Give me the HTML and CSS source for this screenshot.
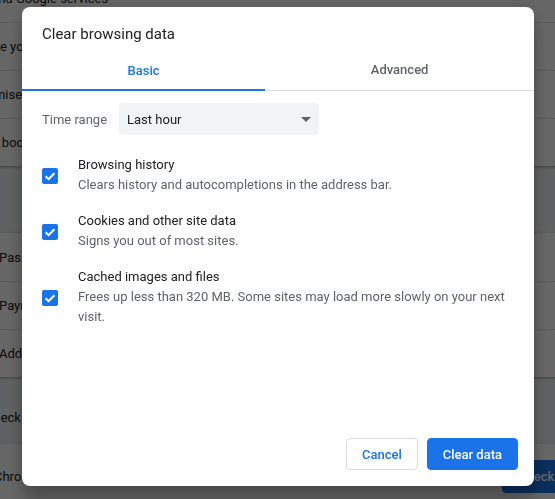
FILE: index.html
```html
<!DOCTYPE html>
<html lang="en">
<head>
<meta charset="utf-8">
<title>Clear browsing data</title>
<link rel="stylesheet" href="styles.css">
</head>
<body>
<div class="page">
  <div class="card">
    <div class="row people"><span>Sync and Google services</span></div>
    <div class="row people"><span>Manage your Google Account</span></div>
    <div class="row people"><span>Customise your Chrome profile</span></div>
    <div class="row people"><span>Import bookmarks and settings</span></div>
  </div>
  <div class="heading">Autofill</div>
  <div class="card">
    <div class="row autofill"><span>Passwords</span></div>
    <div class="row autofill"><span>Payment methods</span></div>
    <div class="row autofill"><span>Addresses and more</span></div>
  </div>
  <div class="heading safety-heading">Safety check</div>
  <div class="card">
    <div class="row safety">
      <span class="safety-text">Chrome can help keep you safe from data breaches, bad extensions and more</span>
      <span class="check-now">Check now</span>
    </div>
  </div>
</div>

<div class="backdrop">
  <div class="dialog">
    <div class="dialog-title">Clear browsing data</div>
    <div class="tabs">
      <div class="tab tab-selected">Basic</div>
      <div class="tab">Advanced</div>
    </div>
    <div class="dialog-body">
      <div class="time-range">
        <span class="time-label">Time range</span>
        <div class="select">
          <span>Last hour</span>
          <svg class="select-arrow" width="10" height="5" viewBox="0 0 10 5"><path d="M0 0 L10 0 L5 5 Z" fill="#5f6368"/></svg>
        </div>
      </div>
      <div class="items">
        <div class="item">
          <span class="checkbox"><svg width="16" height="16" viewBox="0 0 16 16"><path d="M3.6 8.2 L6.6 11.1 L12.4 5.2" fill="none" stroke="#fff" stroke-width="2"/></svg></span>
          <div class="item-text">
            <div class="item-title">Browsing history</div>
            <div class="item-desc">Clears history and autocompletions in the address bar.</div>
          </div>
        </div>
        <div class="item">
          <span class="checkbox"><svg width="16" height="16" viewBox="0 0 16 16"><path d="M3.6 8.2 L6.6 11.1 L12.4 5.2" fill="none" stroke="#fff" stroke-width="2"/></svg></span>
          <div class="item-text">
            <div class="item-title">Cookies and other site data</div>
            <div class="item-desc">Signs you out of most sites.</div>
          </div>
        </div>
        <div class="item">
          <span class="checkbox"><svg width="16" height="16" viewBox="0 0 16 16"><path d="M3.6 8.2 L6.6 11.1 L12.4 5.2" fill="none" stroke="#fff" stroke-width="2"/></svg></span>
          <div class="item-text">
            <div class="item-title">Cached images and files</div>
            <div class="item-desc">Frees up less than 320 MB. Some sites may load more slowly on your next visit.</div>
          </div>
        </div>
      </div>
    </div>
    <div class="dialog-footer">
      <button class="btn btn-cancel">Cancel</button>
      <button class="btn btn-action">Clear data</button>
    </div>
  </div>
</div>
</body>
</html>
```
FILE: styles.css
```css
* { box-sizing: border-box; }

html, body {
  margin: 0;
  padding: 0;
}

body {
  width: 555px;
  height: 499px;
  overflow: hidden;
  background: #f1f3f4;
  font-family: Roboto, "Liberation Sans", Arial, sans-serif;
  font-size: 13px;
  color: #202124;
}

/* background settings page */
.page {
  display: flex;
  flex-direction: column;
  width: 680px;
  margin: -26px 0 0 -60px;
}

.card {
  background: #fff;
  box-shadow: 0 1px 2px rgba(60, 64, 67, 0.3), 0 1px 3px 1px rgba(60, 64, 67, 0.15);
  border-radius: 4px;
}

.row {
  height: 48px;
  display: flex;
  align-items: center;
  white-space: nowrap;
  border-top: 1px solid #e0e0e0;
}

.row:first-child { border-top: none; }

.people { padding-left: 20px; }
.autofill { padding-left: 59px; }

.heading {
  height: 67px;
  padding: 31px 0 16px 7px;
  line-height: 20px;
  color: #202124;
}

.safety {
  height: 64px;
  padding: 0 20px 0 54px;
  justify-content: space-between;
  gap: 16px;
}

.safety-text {
  flex: 1;
  overflow: hidden;
}

.check-now {
  height: 33px;
  display: flex;
  align-items: center;
  padding: 0 16px;
  background: #1a73e8;
  color: #fff;
  font-weight: 500;
  border-radius: 4px;
  width: 98px;
  margin-top: 1px;
}

/* dialog */
.backdrop {
  position: fixed;
  inset: 0;
  background: rgba(0, 0, 0, 0.6);
  padding: 7px 0 0 22px;
}

.dialog {
  width: 512px;
  height: 479px;
  background: #fff;
  border-radius: 8px;
  box-shadow: 0 0 16px rgba(0, 0, 0, 0.12), 0 16px 16px rgba(0, 0, 0, 0.24);
  display: flex;
  flex-direction: column;
}

.dialog-title {
  padding: 16px 20px 0;
  font-size: 15px;
  line-height: 23px;
  color: #202124;
}

.tabs {
  display: flex;
  height: 45px;
  border-bottom: 1px solid #dadce0;
}

.tab {
  flex: 1 1 auto;
  display: flex;
  align-items: center;
  justify-content: center;
  font-weight: 500;
  color: #5f6368;
  padding-top: 3px;
}

.tab-selected {
  color: #1a73e8;
  box-shadow: inset 0 -2px 0 #1a73e8;
  margin-bottom: -1px;
}

.dialog-body {
  flex: 1;
  padding: 12px 20px 0;
}

.time-range {
  display: flex;
  align-items: center;
  gap: 12px;
  height: 32px;
}

.time-label { color: #5f6368; }

.select {
  width: 200px;
  height: 32px;
  background: #f1f3f4;
  border-radius: 4px;
  display: flex;
  align-items: center;
  justify-content: space-between;
  padding: 0 8px;
  color: #202124;
}

.select-arrow { margin-top: 1px; }

.items {
  margin-top: 20px;
  display: flex;
  flex-direction: column;
  gap: 16px;
}

.item {
  display: flex;
  align-items: center;
  gap: 20px;
}

.checkbox {
  flex: none;
  width: 16px;
  height: 16px;
  border-radius: 2px;
  background: #1a73e8;
  display: flex;
  margin-top: 1px;
}

.item-text {
  line-height: 20px;
  max-width: 436px;
}

.item-title { color: #202124; }
.item-desc { color: #5f6368; }

.dialog-footer {
  display: flex;
  justify-content: flex-end;
  gap: 9px;
  padding: 0 16px 16px;
}

.btn {
  height: 32px;
  padding: 0 15px;
  border-radius: 4px;
  font-family: inherit;
  font-size: 13px;
  font-weight: 500;
  cursor: pointer;
}

.btn-cancel {
  background: #fff;
  color: #1a73e8;
  border: 1px solid #dadce0;
}

.btn-action {
  background: #1a73e8;
  color: #fff;
  border: 1px solid #1a73e8;
}
```
